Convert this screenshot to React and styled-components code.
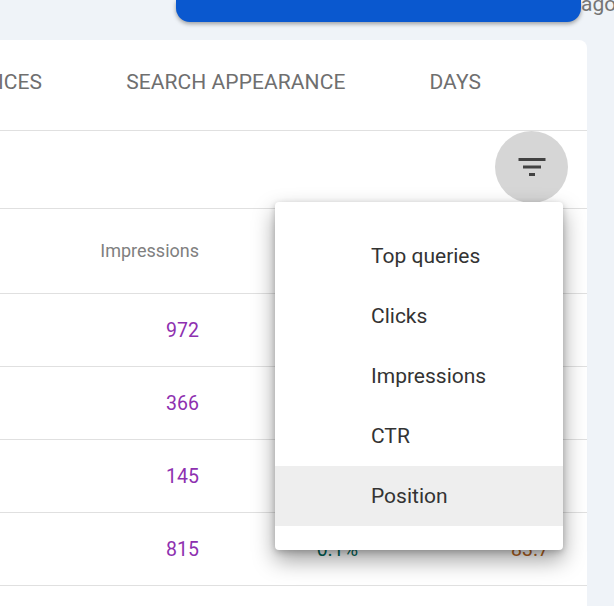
import { createGlobalStyle } from "styled-components";
import styled from "styled-components";

const GlobalStyle = createGlobalStyle`
  html, body {
    margin: 0;
    height: 606px;
    overflow: hidden;
    background: #eff3f8;
    font-family: Roboto, "Liberation Sans", sans-serif;
  }
`;

const Page = styled.div`
  width: 614px;
  height: 606px;
  overflow: hidden;
`;

const TopRow = styled.div`
  display: flex;
  height: 22px;
  margin-left: 176px;
  margin-bottom: 18px;
`;

const BlueBar = styled.div`
  flex: none;
  width: 405px;
  height: 22px;
  background: #0a58cf;
  border-radius: 0 0 14px 14px;
  box-shadow: 0 2px 4px rgba(0, 0, 0, 0.35);
`;

const Ago = styled.span`
  margin-top: -8px;
  font-size: 21px;
  line-height: 24px;
  color: #757575;
  white-space: nowrap;
`;

const Card = styled.div`
  position: relative;
  width: 647px;
  height: 566px;
  margin-left: -60px;
  background: #fff;
  border-radius: 8px 8px 0 0;
`;

const Tabs = styled.div`
  display: flex;
  justify-content: flex-end;
  align-items: center;
  gap: 84px;
  height: 91px;
  padding-right: 106px;
  padding-bottom: 6px;
  box-sizing: border-box;
  border-bottom: 1px solid #e0e0e0;
`;

const Tab = styled.div`
  font-size: 21px;
  letter-spacing: 0.08px;
  color: #6f6f6f;
  white-space: nowrap;
`;

const Toolbar = styled.div`
  display: flex;
  justify-content: flex-end;
  height: 78px;
  padding-right: 19px;
  box-sizing: border-box;
  border-bottom: 1px solid #e0e0e0;
`;

const FilterButton = styled.button`
  display: flex;
  align-items: center;
  justify-content: center;
  width: 73px;
  height: 72px;
  padding: 0;
  border: 0;
  border-radius: 50%;
  background: #d6d6d6;
  color: #424242;
`;

const Row = styled.div`
  display: grid;
  grid-template-columns: 259px 159px 191px;
  align-items: center;
  height: ${(p) => p.$height}px;
  box-sizing: border-box;
  border-bottom: 1px solid #e0e0e0;
`;

const HeadCell = styled.div`
  grid-column: 1;
  margin-bottom: 1px;
  text-align: right;
  font-size: 18px;
  color: #808080;
`;

const Cell = styled.div`
  text-align: right;
  font-size: 19.5px;
  color: ${(p) => p.$color};
`;

const Menu = styled.ul`
  position: absolute;
  top: 162px;
  right: 24px;
  width: 288px;
  margin: 0;
  padding: 24px 0;
  list-style: none;
  background: #fff;
  border-radius: 4px;
  box-shadow: 0 10px 22px rgba(0, 0, 0, 0.38), 0 2px 6px rgba(0, 0, 0, 0.2);
`;

const MenuItem = styled.li`
  height: 60px;
  padding-left: 96px;
  line-height: 60px;
  font-size: 21px;
  color: #333;
  background: ${(p) => (p.$active ? "#eeeeee" : "transparent")};
`;

const rows = [
  { impressions: "972" },
  { impressions: "366" },
  { impressions: "145" },
  { impressions: "815", ctr: "0.1%", position: "83.7" },
];

const menuItems = ["Top queries", "Clicks", "Impressions", "CTR", "Position"];

function FilterIcon() {
  return (
    <svg width="36" height="36" viewBox="0 0 24 24" fill="currentColor">
      <path d="M10 18h4v-2h-4v2zM3 6v2h18V6H3zm3 7h12v-2H6v2z" />
    </svg>
  );
}

export default function App() {
  return (
    <Page>
      <GlobalStyle />
      <TopRow>
        <BlueBar />
        <Ago>ago</Ago>
      </TopRow>
      <Card>
        <Tabs>
          <Tab>DEVICES</Tab>
          <Tab>SEARCH APPEARANCE</Tab>
          <Tab>DAYS</Tab>
        </Tabs>
        <Toolbar>
          <FilterButton>
            <FilterIcon />
          </FilterButton>
        </Toolbar>
        <Row $height={85}>
          <HeadCell>Impressions</HeadCell>
        </Row>
        {rows.map((row) => (
          <Row key={row.impressions} $height={73}>
            <Cell $color="#8e30b0">{row.impressions}</Cell>
            <Cell $color="#00695c">{row.ctr}</Cell>
            <Cell $color="#b5651d">{row.position}</Cell>
          </Row>
        ))}
        <Menu>
          {menuItems.map((item) => (
            <MenuItem key={item} $active={item === "Position"}>
              {item}
            </MenuItem>
          ))}
        </Menu>
      </Card>
    </Page>
  );
}
